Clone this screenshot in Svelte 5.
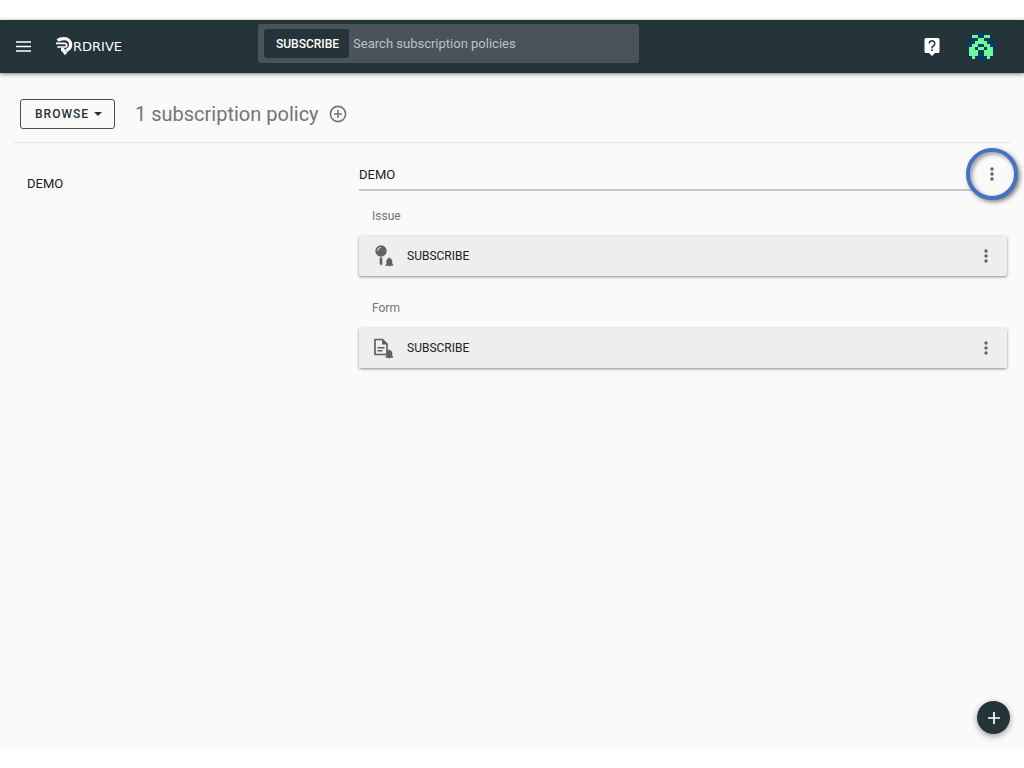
<script lang="ts">
  interface Policy {
    id: number;
    kind: string;
    icon: "pin" | "form";
    name: string;
  }

  const policies: Policy[] = [
    { id: 1, kind: "Issue", icon: "pin", name: "SUBSCRIBE" },
    { id: 2, kind: "Form", icon: "form", name: "SUBSCRIBE" },
  ];

  // 8x8 identicon, "#" marks a filled cell
  const avatar = [
    ".##..##.",
    "...##...",
    "..####..",
    ".##..##.",
    "##.##.##",
    "###..###",
    "###..###",
    ".#....#.",
  ];

  let query = $state("");
</script>

{#snippet dots()}
  <svg width="20" height="20" viewBox="0 0 24 24" aria-hidden="true">
    <path
      fill="currentColor"
      d="M12 8a2 2 0 1 0 0-4 2 2 0 0 0 0 4zm0 2a2 2 0 1 0 0 4 2 2 0 0 0 0-4zm0 6a2 2 0 1 0 0 4 2 2 0 0 0 0-4z"
    />
  </svg>
{/snippet}

<div class="app">
  <header>
    <div class="brand">
      <button class="icon-btn" aria-label="Menu">
        <svg width="15" height="11" viewBox="0 0 15 11" aria-hidden="true">
          <path stroke="currentColor" stroke-width="1.7" d="M0 1h15M0 5.500h15M0 10h15" />
        </svg>
      </button>
      <a class="logo" href="#home">
        <svg width="17" height="19" viewBox="0 0 51 57" fill="none" stroke="currentColor" aria-hidden="true">
          <path stroke-width="10" d="M5 11C10 6 17 5 24 5c12 0 20 8 20 18 0 9-5 14-14 18" />
          <path stroke-width="5" d="M0 19h26c8 0 8 11 0 11H4" />
          <path stroke-width="10" d="M15 38h6l9 13" />
        </svg>
        <span>RDRIVE</span>
      </a>
    </div>
    <div class="search">
      <button class="scope">SUBSCRIBE</button>
      <input
        type="text"
        aria-label="Search subscription policies"
        placeholder="Search subscription policies"
        bind:value={query}
      />
    </div>
    <div class="account">
      <button class="icon-btn" aria-label="Help">
        <svg width="16" height="19" viewBox="0 0 16 19" aria-hidden="true">
          <path fill="#fff" d="M2 1h12q1.500 0 1.500 1.500v12q0 1.500-1.500 1.500h-3l-3 3-3-3H2q-1.500 0-1.500-1.500v-12Q.5 1 2 1z" />
          <path fill="none" stroke="#243439" stroke-width="1.6" d="M5.300 6.500a2.700 2.700 0 1 1 4.700 1.800C9 9.300 8 9.600 8 11.200" />
          <path fill="#243439" d="M7.200 12.300h1.600v1.700H7.200z" />
        </svg>
      </button>
      <button class="icon-btn" aria-label="Account">
        <svg width="30" height="30" viewBox="0 0 30 30" aria-hidden="true">
          <circle cx="15" cy="15" r="14.500" fill="#0b3b5f" />
          {#each avatar as row, y}
            {#each row as cell, x}
              {#if cell === "#"}
                <rect x={3 + x * 3} y={3 + y * 3} width="3" height="3" fill="#6dfa9b" />
              {/if}
            {/each}
          {/each}
        </svg>
      </button>
    </div>
  </header>

  <div class="toolbar">
    <button class="browse">
      BROWSE
      <svg width="8" height="4" viewBox="0 0 8 4" aria-hidden="true">
        <path fill="currentColor" d="M0 0h8L4 4z" />
      </svg>
    </button>
    <h1>1 subscription policy</h1>
    <button class="icon-btn" aria-label="Add subscription policy">
      <svg width="18" height="18" viewBox="0 0 18 18" aria-hidden="true">
        <circle cx="9" cy="9" r="7.600" fill="none" stroke="currentColor" stroke-width="1.6" />
        <path stroke="currentColor" stroke-width="1.6" d="M9 5v8M5 9h8" />
      </svg>
    </button>
  </div>

  <main>
    <nav aria-label="Groups">
      <a href="#demo">DEMO</a>
    </nav>
    <section id="demo">
      <div class="group-head">
        <h2>DEMO</h2>
        <button class="icon-btn highlight" aria-label="DEMO actions">{@render dots()}</button>
      </div>
      {#each policies as policy (policy.id)}
        <h3>{policy.kind}</h3>
        <div class="card">
          <svg width="22" height="24" viewBox="0 0 22 24" aria-hidden="true">
            {#if policy.icon === "pin"}
              <circle cx="8" cy="7" r="5.700" fill="currentColor" />
              <path fill="none" stroke="#eee" d="M4.500 7A3.500 3.500 0 0 1 8 3.500" />
              <path fill="currentColor" d="M6.700 13.500h2.600V20L8 21.500 6.700 20z" />
            {:else}
              <path
                fill="none"
                stroke="currentColor"
                stroke-width="1.7"
                stroke-linejoin="round"
                d="M9.500 3.500H2v15h12V8z"
              />
              <path fill="currentColor" d="M9 3l5.500 5.500H9zM4.500 11h7v1.500h-7zM4.500 14h5v1.500h-5z" />
            {/if}
            <path
              fill="currentColor"
              d="M15.300 14.600q0-1.100 1-1.100t1 1.100q2 .6 2 3V20l1 1v.7h-3q-1 1.500-2 0h-3V21l1-1v-2.400q0-2.400 2-3z"
            />
          </svg>
          <span class="name">{policy.name}</span>
          <button class="icon-btn" aria-label="{policy.kind} policy actions">{@render dots()}</button>
        </div>
      {/each}
    </section>
  </main>

  <button class="fab" aria-label="Create">
    <svg width="12" height="12" viewBox="0 0 12 12" aria-hidden="true">
      <path stroke="currentColor" stroke-width="1.700" d="M6 0v12M0 6h12" />
    </svg>
  </button>
</div>

<style>
  :global(body) {
    background: #fff;
  }
  .app {
    position: relative;
    min-height: calc(100vh - 40px);
    margin: 20px 0;
    background: #fafafa;
    color: #212121;
    font-family: Roboto, sans-serif;
    font-size: 13px;
  }
  button {
    font-family: inherit;
    cursor: pointer;
  }
  svg {
    display: block;
  }
  .icon-btn {
    display: flex;
    padding: 0;
    border: none;
    background: transparent;
    color: inherit;
  }
  header {
    display: grid;
    grid-template-columns: 258px minmax(200px, 381px) 1fr;
    align-items: center;
    height: 53px;
    background: #243439;
    color: #fff;
    box-shadow: 0 1px 4px rgba(0, 0, 0, 0.5);
  }
  .brand {
    display: flex;
    align-items: center;
    gap: 25px;
    padding-left: 16px;
  }
  .logo {
    display: flex;
    align-items: center;
    color: #fff;
    font-family: "DejaVu Sans", sans-serif;
    text-decoration: none;
  }
  .search {
    display: flex;
    align-self: start;
    box-sizing: border-box;
    height: 39px;
    margin-top: 4px;
    padding: 5px 6px;
    gap: 4px;
    border-radius: 3px;
    background: #4b535a;
  }
  .scope {
    flex: none;
    padding: 0 10px 0 12px;
    border: none;
    border-radius: 3px;
    background: #243439;
    color: #fff;
    font-size: 12px;
    font-weight: 500;
  }
  input {
    flex: 1;
    min-width: 0;
    padding: 0;
    border: none;
    outline: none;
    background: transparent;
    color: #fff;
    font-family: inherit;
    font-size: 13px;
  }
  input::placeholder {
    color: #bdc1c4;
  }
  .account {
    display: flex;
    align-items: center;
    justify-content: flex-end;
    gap: 26px;
    padding-right: 28px;
  }
  .toolbar {
    display: flex;
    align-items: center;
    margin: 0 14px;
    padding: 26px 6px 13px;
    border-bottom: 1px solid #e2e2e2;
    color: #757575;
  }
  .browse {
    display: flex;
    align-items: center;
    gap: 5px;
    height: 30px;
    padding: 0 12px 0 14px;
    border: 1px solid #455055;
    border-radius: 3px;
    background: transparent;
    color: #243439;
    font-size: 12px;
    font-weight: 500;
    letter-spacing: 1px;
  }
  h1 {
    margin: 0 10px 0 20px;
    font-size: 20px;
    font-weight: 400;
  }
  main {
    display: grid;
    grid-template-columns: 332px 1fr;
    padding: 16px 17px 0 27px;
  }
  nav {
    padding-top: 17px;
  }
  nav a {
    color: inherit;
    text-decoration: none;
  }
  .group-head {
    display: flex;
    align-items: center;
    justify-content: space-between;
    height: 30px;
    border-bottom: 2px solid #c8c8c8;
  }
  h2 {
    margin: 0;
    font-size: 13px;
    font-weight: 400;
  }
  .highlight {
    align-items: center;
    justify-content: center;
    box-sizing: border-box;
    width: 52px;
    height: 52px;
    margin-right: -11px;
    border: 4px solid #4472c4;
    border-radius: 50%;
    background: #fafafa;
    color: #616161;
    box-shadow: 2px 2px 4px rgba(0, 0, 0, 0.5), inset 2px 2px 4px rgba(0, 0, 0, 0.4);
  }
  h3 {
    margin: 0;
    padding: 17px 13px 12px;
    color: #757575;
    font-size: 12px;
    font-weight: 400;
    line-height: 16px;
  }
  .card {
    display: flex;
    align-items: center;
    height: 40px;
    margin-bottom: 7px;
    padding: 0 11px 0 14px;
    border-radius: 2px;
    background: #eee;
    box-shadow: 0 1px 3px rgba(0, 0, 0, 0.45);
    color: #616161;
  }
  .name {
    flex: 1;
    margin-left: 12px;
    color: #212121;
    font-size: 12px;
  }
  .fab {
    position: absolute;
    right: 14px;
    bottom: 14px;
    display: flex;
    align-items: center;
    justify-content: center;
    width: 33px;
    height: 33px;
    padding: 0;
    border: none;
    border-radius: 50%;
    background: #243439;
    color: #fff;
    box-shadow: 0 2px 6px rgba(0, 0, 0, 0.4);
  }
</style>
